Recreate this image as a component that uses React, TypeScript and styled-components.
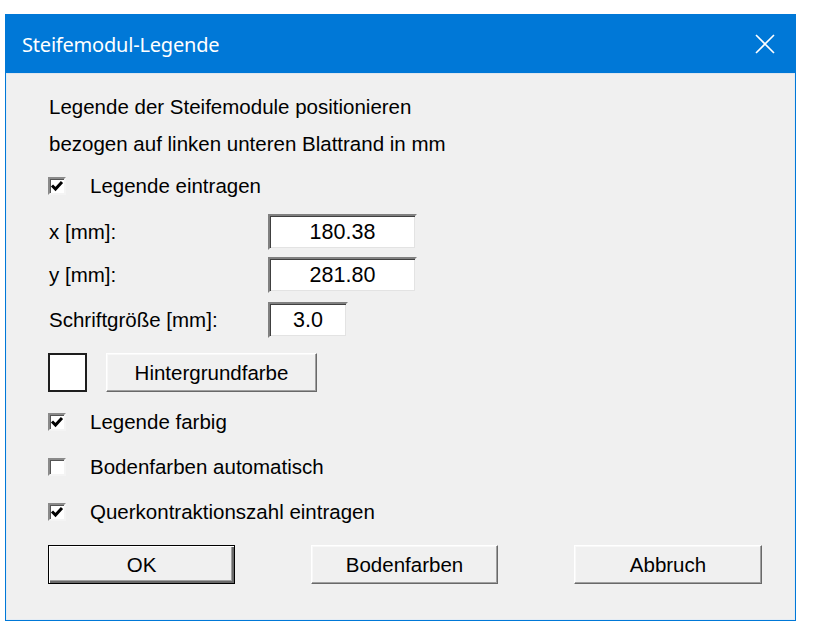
import React from "react";
import styled, { createGlobalStyle } from "styled-components";

const GlobalStyle = createGlobalStyle`
  body {
    margin: 0;
    background: #ffffff;
    font-family: "Liberation Sans", Arial, sans-serif;
  }
`;

const Window = styled.div`
  margin: 14px 0 0 5px;
  width: 789px;
  height: 605px;
  border: 1px solid #0078d7;
  display: flex;
  flex-direction: column;
  background: #f0f0f0;
`;

const TitleBar = styled.div`
  height: 58px;
  background: #0078d7;
  display: flex;
  align-items: center;
  justify-content: space-between;
  padding: 0 20px 0 16px;
  border-bottom: 1px solid #dfe6ee;
`;

const Title = styled.span`
  color: #ffffff;
  font-family: "Noto Sans", "Open Sans", sans-serif;
  font-size: 20px;
  letter-spacing: -0.2px;
`;

const Content = styled.div`
  flex: 1;
  display: flex;
  flex-direction: column;
  padding: 14px 0 0 41px;
  border-left: 1px solid #e4ecf4;
  border-right: 1px solid #e4ecf4;
  border-bottom: 1px solid #e4ecf4;
  color: #000000;
  font-size: 20.5px;
`;

const Intro = styled.div`
  line-height: 37px;
  padding-left: 1px;
`;

const CheckRow = styled.label<{ $top: number }>`
  display: flex;
  align-items: center;
  height: 30px;
  margin-top: ${(p) => p.$top}px;
  gap: 24px;
`;

const CheckBox = styled.span`
  box-sizing: border-box;
  flex-shrink: 0;
  width: 18px;
  height: 18px;
  background: #ffffff;
  border: 2px solid;
  border-color: #8a8a8a #f4f4f4 #f4f4f4 #8a8a8a;
  box-shadow: inset 1px 1px #555555;
  display: flex;
  align-items: center;
  justify-content: center;
`;

const FieldRow = styled.div<{ $top: number }>`
  display: grid;
  grid-template-columns: 220px auto;
  align-items: center;
  margin-top: ${(p) => p.$top}px;
`;

const FieldLabel = styled.span`
  padding-left: 1px;
`;

const Field = styled.div<{ $width: number }>`
  box-sizing: border-box;
  width: ${(p) => p.$width}px;
  height: 36px;
  background: #ffffff;
  border: 2px solid;
  border-color: #808080 #f0f0f0 #f0f0f0 #808080;
  box-shadow: inset 1px 1px #404040, inset -1px -1px #e3e3e3;
  display: flex;
  align-items: center;
  justify-content: center;
  font-size: 21.5px;
`;

const ColorRow = styled.div`
  display: flex;
  align-items: center;
  gap: 19px;
  margin-top: 15px;
`;

const Swatch = styled.div`
  width: 35px;
  height: 35px;
  background: #ffffff;
  border: 2px solid #1e1e1e;
`;

const Button = styled.button<{ $width: number; $default?: boolean }>`
  width: ${(p) => p.$width}px;
  height: 39px;
  background: #f0f0f0;
  font-family: "Liberation Sans", Arial, sans-serif;
  font-size: 20.5px;
  color: #000000;
  padding: 0;
  border: 1px solid;
  border-color: ${(p) =>
    p.$default ? "#000000" : "#ffffff #696969 #696969 #ffffff"};
  box-shadow: ${(p) =>
    p.$default
      ? "inset 1px 1px #ffffff, inset -2px -2px #696969, inset -3px -3px #a0a0a0"
      : "inset -1px -1px #a0a0a0, inset 1px 1px #f8f8f8"};
`;

const ButtonRow = styled.div`
  display: flex;
  margin-top: 18px;
  gap: 76px;
`;

function Check({ checked }: { checked: boolean }) {
  return (
    <CheckBox>
      {checked && (
        <svg width="14" height="14" viewBox="0 0 14 14">
          <polyline
            points="2,6.5 5.5,10 12,3"
            fill="none"
            stroke="#000"
            strokeWidth="3"
          />
        </svg>
      )}
    </CheckBox>
  );
}

function CloseIcon() {
  return (
    <svg width="20" height="20" viewBox="0 0 20 20">
      <path d="M1 1 L19 19 M19 1 L1 19" stroke="#ffffff" strokeWidth="1.6" />
    </svg>
  );
}

export default function App() {
  return (
    <>
      <GlobalStyle />
      <Window>
        <TitleBar>
          <Title>Steifemodul-Legende</Title>
          <CloseIcon />
        </TitleBar>
        <Content>
          <Intro>
            Legende der Steifemodule positionieren
            <br />
            bezogen auf linken unteren Blattrand in mm
          </Intro>
          <CheckRow $top={9}>
            <Check checked />
            Legende eintragen
          </CheckRow>
          <FieldRow $top={13}>
            <FieldLabel>x [mm]:</FieldLabel>
            <Field $width={149}>180.38</Field>
          </FieldRow>
          <FieldRow $top={7}>
            <FieldLabel>y [mm]:</FieldLabel>
            <Field $width={149}>281.80</Field>
          </FieldRow>
          <FieldRow $top={9}>
            <FieldLabel>Schriftgröße [mm]:</FieldLabel>
            <Field $width={80}>3.0</Field>
          </FieldRow>
          <ColorRow>
            <Swatch />
            <Button $width={211}>Hintergrundfarbe</Button>
          </ColorRow>
          <CheckRow $top={15}>
            <Check checked />
            Legende farbig
          </CheckRow>
          <CheckRow $top={15}>
            <Check checked={false} />
            Bodenfarben automatisch
          </CheckRow>
          <CheckRow $top={15}>
            <Check checked />
            Querkontraktionszahl eintragen
          </CheckRow>
          <ButtonRow>
            <Button $width={187} $default>
              OK
            </Button>
            <Button $width={187}>Bodenfarben</Button>
            <Button $width={188}>Abbruch</Button>
          </ButtonRow>
        </Content>
      </Window>
    </>
  );
}
